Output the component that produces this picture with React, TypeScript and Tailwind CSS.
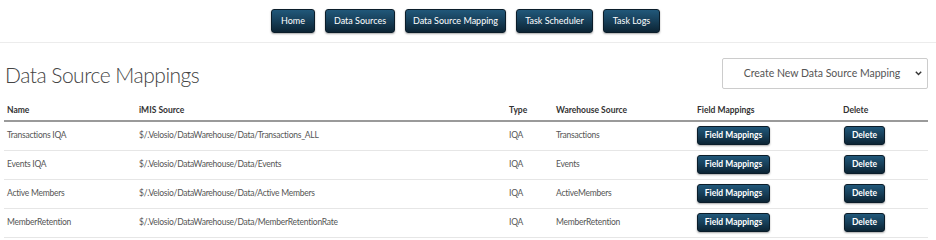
import React from 'react';

const navItems = [
  { label: 'Home', w: 'w-[44px]' },
  { label: 'Data Sources', w: 'w-[70px]' },
  { label: 'Data Source Mapping', w: 'w-[101px]' },
  { label: 'Task Scheduler', w: 'w-[77px]' },
  { label: 'Task Logs', w: 'w-[57px]' },
];

const rows = [
  { name: 'Transactions IQA', source: '$/.Velosio/DataWarehouse/Data/Transactions_ALL', type: 'IQA', warehouse: 'Transactions' },
  { name: 'Events IQA', source: '$/.Velosio/DataWarehouse/Data/Events', type: 'IQA', warehouse: 'Events' },
  { name: 'Active Members', source: '$/.Velosio/DataWarehouse/Data/Active Members', type: 'IQA', warehouse: 'ActiveMembers' },
  { name: 'MemberRetention', source: '$/.Velosio/DataWarehouse/Data/MemberRetentionRate', type: 'IQA', warehouse: 'MemberRetention' },
];

function DarkButton({ children, className = '' }: { children: React.ReactNode; className?: string }) {
  return (
    <button
      className={`rounded-[3px] border border-[#0b1d2a] bg-gradient-to-b from-[#21587a] via-[#173f59] to-[#0c2434] text-white shadow-[0_1px_2px_rgba(0,0,0,0.35)] ${className}`}
    >
      {children}
    </button>
  );
}

export default function App() {
  return (
    <div className="w-[936px] h-[240px] bg-white overflow-hidden text-[#555] font-['Lato',sans-serif]">
      {/* top nav */}
      <div className="h-[43px] border-b border-[#ececec] flex items-start justify-center gap-[10px] pt-[9px] pr-[5px]">
        {navItems.map((item) => (
          <DarkButton key={item.label} className={`h-[24px] ${item.w} text-[9px]`}>
            {item.label}
          </DarkButton>
        ))}
      </div>

      <div className="px-[4px]">
        <div className="flex items-start justify-between pt-[15px] pr-[4px]">
          <h1 className="text-[21px] font-light text-[#444] leading-[30px] pl-[1px] mt-[2px] tracking-[-0.5px]">
            Data Source Mappings
          </h1>
          <div className="relative w-[206px] h-[31px] border border-[#ccc] rounded-[2px] flex items-center justify-center text-[10.5px] text-[#555]">
            <span className="pr-[6px]">Create New Data Source Mapping</span>
            <svg className="absolute right-[5px] top-[12px]" width="7" height="5" viewBox="0 0 7 5">
              <path d="M0.8 0.8 L3.5 3.6 L6.2 0.8" fill="none" stroke="#333" strokeWidth="1.4" />
            </svg>
          </div>
        </div>

        <table className="table-fixed w-[924px] mt-[14px] border-collapse text-[8.5px]">
          <colgroup>
            <col className="w-[132px]" />
            <col className="w-[370px]" />
            <col className="w-[47px]" />
            <col className="w-[141px]" />
            <col className="w-[146px]" />
            <col className="w-[88px]" />
          </colgroup>
          <thead>
            <tr className="h-[17px] border-b-2 border-[#9a9a9a] text-left text-[#333]">
              <th className="font-bold pl-[3px] align-top">Name</th>
              <th className="font-bold pl-[3px] align-top">iMIS Source</th>
              <th className="font-bold pl-[3px] align-top">Type</th>
              <th className="font-bold pl-[3px] align-top">Warehouse Source</th>
              <th className="font-bold pl-[3px] align-top">Field Mappings</th>
              <th className="font-bold pl-[3px] align-top">Delete</th>
            </tr>
          </thead>
          <tbody className="tracking-[-0.25px]">
            {rows.map((r) => (
              <tr key={r.name} className="h-[29px] border-b border-[#e6e6e6]">
                <td className="pl-[3px]">{r.name}</td>
                <td className="pl-[3px]">{r.source}</td>
                <td className="pl-[3px]">{r.type}</td>
                <td className="pl-[3px]">{r.warehouse}</td>
                <td className="pl-[3px]">
                  <DarkButton className="h-[19px] w-[73px] text-[8.5px] font-bold tracking-normal">Field Mappings</DarkButton>
                </td>
                <td className="pl-[4px]">
                  <DarkButton className="h-[19px] w-[41px] text-[8.5px] font-bold tracking-normal">Delete</DarkButton>
                </td>
              </tr>
            ))}
          </tbody>
        </table>
      </div>
    </div>
  );
}
